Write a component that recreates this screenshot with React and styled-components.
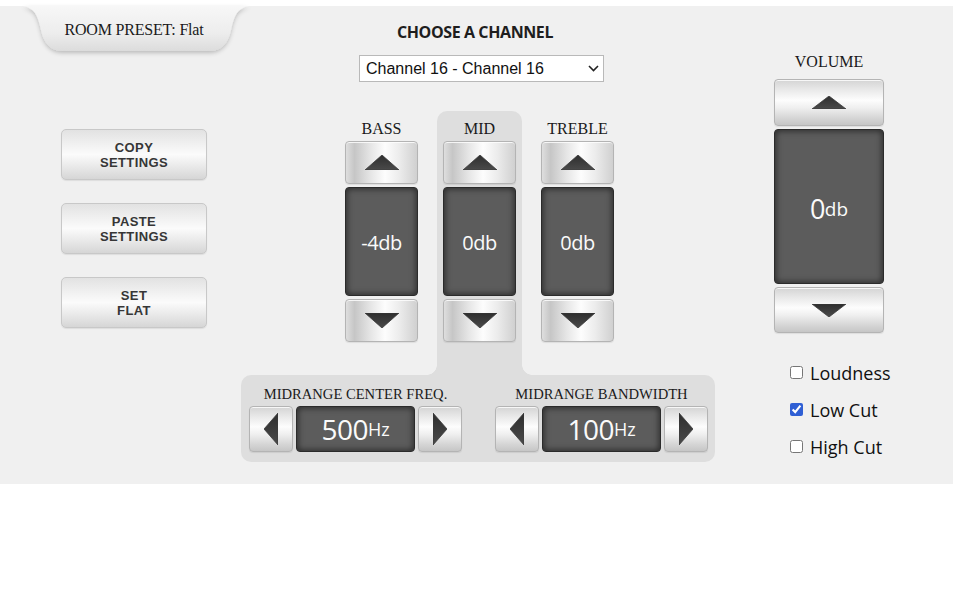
import React from "react";
import styled, { createGlobalStyle, css } from "styled-components";

const Global = createGlobalStyle`
  html, body { margin: 0; padding: 0; background: #ffffff; }
  * { box-sizing: border-box; }
`;

const Panel = styled.div`
  margin-top: 6px;
  width: 953px;
  height: 478px;
  background: #f0f0f0;
  display: flex;
  align-items: flex-start;
`;

/* ---------- left column ---------- */
const LeftCol = styled.div`
  width: 241px;
  padding-left: 23px;
  display: flex;
  flex-direction: column;
`;

const Tab = styled.div`
  position: relative;
  width: 226px;
  height: 46px;
  display: flex;
  align-items: center;
  justify-content: center;
  padding-top: 2px;
  padding-right: 4px;
  font-family: "Liberation Serif", serif;
  font-size: 16px;
  color: #1a1a1a;
  letter-spacing: -0.2px;
`;

const TabShape = styled.svg`
  position: absolute;
  left: 0;
  top: 0;
  overflow: visible;
`;

const TabText = styled.span`
  position: relative;
`;

const ActionStack = styled.div`
  margin-left: 38px;
  margin-top: 77px;
  display: flex;
  flex-direction: column;
  gap: 23px;
`;

const ActionButton = styled.button`
  width: 146px;
  height: 51px;
  border: 1px solid #c8c8c8;
  border-radius: 5px;
  background: linear-gradient(180deg, #e2e2e2 0%, #f0f0f0 28%, #fbfbfb 50%, #ebebeb 72%, #d6d6d6 100%);
  box-shadow: 0 1px 1px rgba(0, 0, 0, 0.08);
  padding: 0;
  display: flex;
  flex-direction: column;
  align-items: center;
  justify-content: center;
  cursor: pointer;
`;

const ActionLine = styled.span`
  display: block;
  font-family: "Liberation Sans", Arial, sans-serif;
  font-weight: 700;
  font-size: 13px;
  line-height: 15px;
  height: 15px;
  color: #363636;
  letter-spacing: 0.4px;
`;

/* ---------- center column ---------- */
const CenterCol = styled.div`
  width: 474px;
  display: flex;
  flex-direction: column;
  padding-top: 16px;
`;

const Title = styled.div`
  font-family: "Open Sans", sans-serif;
  font-weight: 700;
  font-size: 16px;
  line-height: 20px;
  letter-spacing: -0.4px;
  color: #1e1e1e;
  text-align: center;
  margin-right: 6px;
`;

const SelectWrap = styled.div`
  position: relative;
  margin-top: 13px;
  margin-left: 118px;
  width: 245px;
  height: 27px;
`;

const ChannelSelect = styled.select`
  appearance: none;
  -webkit-appearance: none;
  width: 100%;
  height: 100%;
  font-family: "Liberation Sans", Arial, sans-serif;
  font-size: 16px;
  color: #111;
  background: #fff;
  border: 1px solid #b9b9b9;
  border-radius: 0;
  padding: 0 4px 0 6px;
  outline: none;
`;

const Chevron = styled.svg`
  position: absolute;
  right: 5px;
  top: 10px;
  pointer-events: none;
`;

const EqRow = styled.div`
  margin-top: 29px;
  padding-left: 98px;
  display: flex;
  gap: 13px;
`;

const Channel = styled.div`
  position: relative;
  width: 85px;
  height: 264px;
  padding: 10px 6px 0;
  display: flex;
  flex-direction: column;
  gap: 3px;
  border-radius: 10px 10px 0 0;
  ${(p) =>
    p.$active &&
    css`
      background: #dedede;
      &::before,
      &::after {
        content: "";
        position: absolute;
        bottom: 0;
        width: 10px;
        height: 10px;
      }
      &::before {
        left: -10px;
        background: radial-gradient(circle at 0 0, transparent 9.5px, #dedede 10px);
      }
      &::after {
        right: -10px;
        background: radial-gradient(circle at 100% 0, transparent 9.5px, #dedede 10px);
      }
    `}
`;

const Label = styled.div`
  font-family: "Liberation Serif", serif;
  font-size: ${(p) => p.$size || 16}px;
  line-height: 15px;
  color: #1a1a1a;
  text-align: center;
  white-space: nowrap;
  margin-bottom: ${(p) => p.$gap ?? 2}px;
`;

const metalH = css`
  background: linear-gradient(90deg, #dedede 0%, #c6c6c6 12%, #e6e6e6 35%, #fdfdfd 55%, #ececec 75%, #d0d0d0 100%);
`;

const metalV = css`
  background: linear-gradient(180deg, #d4d4d4 0%, #e9e9e9 22%, #fdfdfd 45%, #efefef 62%, #d5d5d5 85%, #c6c6c6 100%);
`;

const StepButton = styled.button`
  width: ${(p) => p.$w}px;
  height: ${(p) => p.$h}px;
  padding: 0;
  border: 1px solid #b4b4b4;
  border-radius: 4px;
  display: flex;
  align-items: center;
  justify-content: center;
  cursor: pointer;
  flex: none;
  box-shadow: inset 0 1px 0 rgba(255, 255, 255, 0.8), 0 1px 1px rgba(0, 0, 0, 0.08);
  ${(p) => (p.$metal === "v" ? metalV : metalH)}
`;

const Display = styled.div`
  width: ${(p) => p.$w}px;
  height: ${(p) => p.$h}px;
  flex: none;
  background: #5c5c5c;
  border: 1px solid #2b2b2b;
  border-radius: 4px;
  box-shadow: inset 0 0 6px 1px rgba(0, 0, 0, 0.55);
  display: flex;
  align-items: center;
  justify-content: center;
  padding-top: ${(p) => p.$pt || 0}px;
  font-family: "Open Sans", sans-serif;
  color: #fafafa;
  white-space: nowrap;
`;

const Value = styled.span`
  font-size: ${(p) => p.$size}px;
  letter-spacing: -0.5px;
`;

const Unit = styled.span`
  font-size: ${(p) => p.$size}px;
`;

const BottomPanel = styled.div`
  width: 474px;
  height: 87px;
  background: #dedede;
  border-radius: 10px;
  padding: 12px 8px 0;
  display: flex;
  gap: 33px;
`;

const Group = styled.div`
  width: 213px;
  display: flex;
  flex-direction: column;
`;

const Stepper = styled.div`
  display: flex;
  gap: 3px;
`;

/* ---------- right column ---------- */
const RightCol = styled.div`
  margin-left: 59px;
  width: 120px;
  padding-top: 47px;
  display: flex;
  flex-direction: column;
  gap: 3px;
`;

const VolumeLabel = styled(Label)`
  width: 110px;
  margin-top: 1px;
  margin-bottom: 7px;
`;

const CheckList = styled.div`
  margin-top: 18px;
  margin-left: 16px;
  display: flex;
  flex-direction: column;
`;

const CheckRow = styled.label`
  height: 37px;
  display: flex;
  align-items: center;
  font-family: "Open Sans", sans-serif;
  font-size: 18px;
  color: #111;
  white-space: nowrap;
`;

const Check = styled.input`
  width: 13px;
  height: 13px;
  margin: 0 7px 0 0;
  accent-color: #2f5fd4;
`;

const Arrow = ({ dir, w, h }) => {
  const pts = {
    up: `0,${h} ${w / 2},0 ${w},${h}`,
    down: `0,0 ${w},0 ${w / 2},${h}`,
    left: `${w},0 ${w},${h} 0,${h / 2}`,
    right: `0,0 0,${h} ${w},${h / 2}`,
  }[dir];
  return (
    <svg width={w} height={h} viewBox={`0 0 ${w} ${h}`}>
      <defs>
        <linearGradient id={`ag-${dir}`} x1="0" y1="0" x2="0" y2="1">
          <stop offset="0" stopColor="#2e2e2e" />
          <stop offset="1" stopColor="#4a4a4a" />
        </linearGradient>
      </defs>
      <polygon points={pts} fill={`url(#ag-${dir})`} strokeLinejoin="round" stroke="#3a3a3a" strokeWidth="0.8" />
    </svg>
  );
};

const EqChannel = ({ name, value, active }) => (
  <Channel $active={active}>
    <Label $gap={2}>{name}</Label>
    <StepButton $w={73} $h={43}>
      <Arrow dir="up" w={34} h={15} />
    </StepButton>
    <Display $w={73} $h={109} $pt={2}>
      <Value $size={20}>{value}</Value>
    </Display>
    <StepButton $w={73} $h={43}>
      <Arrow dir="down" w={34} h={15} />
    </StepButton>
  </Channel>
);

const FreqGroup = ({ label, value }) => (
  <Group>
    <Label $size={14.6} $gap={4}>{label}</Label>
    <Stepper>
      <StepButton $w={44} $h={46} $metal="v">
        <Arrow dir="left" w={14} h={32} />
      </StepButton>
      <Display $w={119} $h={46}>
        <Value $size={28}>{value}</Value>
        <Unit $size={18}>Hz</Unit>
      </Display>
      <StepButton $w={44} $h={46} $metal="v">
        <Arrow dir="right" w={14} h={32} />
      </StepButton>
    </Stepper>
  </Group>
);

export default function App() {
  return (
    <>
      <Global />
      <Panel>
        <LeftCol>
          <Tab>
            <TabShape width="226" height="46" viewBox="0 0 226 46">
              <defs>
                <linearGradient id="tabg" x1="0" y1="0" x2="0" y2="1">
                  <stop offset="0" stopColor="#f7f7f7" />
                  <stop offset="0.6" stopColor="#ededed" />
                  <stop offset="1" stopColor="#dcdcdc" />
                </linearGradient>
                <filter id="tabshadow" x="-10%" y="-10%" width="120%" height="140%">
                  <feDropShadow dx="0" dy="2" stdDeviation="2" floodColor="#000" floodOpacity="0.22" />
                </filter>
              </defs>
              <path
                d="M0 0 H226 C214 2 211 10 208 24 C205 38 198 45 186 45 H40 C28 45 21 38 18 24 C15 10 12 2 0 0 Z"
                fill="url(#tabg)"
                filter="url(#tabshadow)"
              />
            </TabShape>
            <TabText>ROOM PRESET: Flat</TabText>
          </Tab>
          <ActionStack>
            <ActionButton>
              <ActionLine>COPY</ActionLine>
              <ActionLine>SETTINGS</ActionLine>
            </ActionButton>
            <ActionButton>
              <ActionLine>PASTE</ActionLine>
              <ActionLine>SETTINGS</ActionLine>
            </ActionButton>
            <ActionButton>
              <ActionLine>SET</ActionLine>
              <ActionLine>FLAT</ActionLine>
            </ActionButton>
          </ActionStack>
        </LeftCol>

        <CenterCol>
          <Title>CHOOSE A CHANNEL</Title>
          <SelectWrap>
            <ChannelSelect defaultValue="16">
              <option value="16">Channel 16 - Channel 16</option>
            </ChannelSelect>
            <Chevron width="11" height="7" viewBox="0 0 11 7">
              <polyline points="1,1 5.5,5.5 10,1" fill="none" stroke="#222" strokeWidth="1.6" />
            </Chevron>
          </SelectWrap>
          <EqRow>
            <EqChannel name="BASS" value="-4db" />
            <EqChannel name="MID" value="0db" active />
            <EqChannel name="TREBLE" value="0db" />
          </EqRow>
          <BottomPanel>
            <FreqGroup label="MIDRANGE CENTER FREQ." value="500" />
            <FreqGroup label="MIDRANGE BANDWIDTH" value="100" />
          </BottomPanel>
        </CenterCol>

        <RightCol>
          <VolumeLabel>VOLUME</VolumeLabel>
          <StepButton $w={110} $h={47} $metal="v">
            <Arrow dir="up" w={34} h={13} />
          </StepButton>
          <Display $w={110} $h={155} $pt={4}>
            <Value $size={27}>0</Value>
            <Unit $size={19}>db</Unit>
          </Display>
          <StepButton $w={110} $h={46} $metal="v">
            <Arrow dir="down" w={34} h={13} />
          </StepButton>
          <CheckList>
            <CheckRow>
              <Check type="checkbox" />
              Loudness
            </CheckRow>
            <CheckRow>
              <Check type="checkbox" defaultChecked />
              Low Cut
            </CheckRow>
            <CheckRow>
              <Check type="checkbox" />
              High Cut
            </CheckRow>
          </CheckList>
        </RightCol>
      </Panel>
    </>
  );
}
